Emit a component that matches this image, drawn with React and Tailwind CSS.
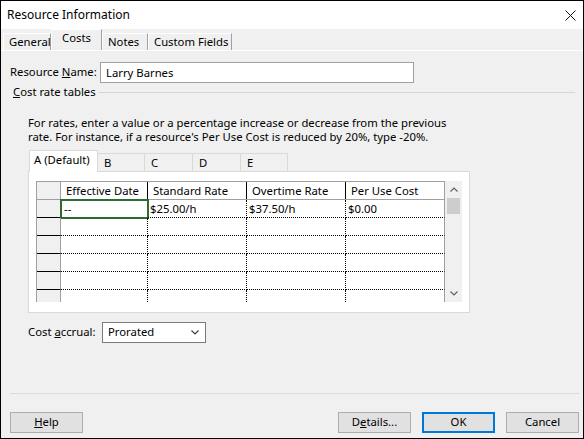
import React from "react";

const font = { fontFamily: '"Segoe UI", "Noto Sans", sans-serif' };

function Chevron({ className = "", up = false }) {
  return (
    <svg width="8" height="5" viewBox="0 0 8 5" className={className}>
      <path
        d={up ? "M0.5 4.5 L4 1 L7.5 4.5" : "M0.5 0.5 L4 4 L7.5 0.5"}
        fill="none"
        stroke="currentColor"
        strokeWidth="1.2"
      />
    </svg>
  );
}

const cols = [
  { key: "date", title: "Effective Date", w: "w-[87px]" },
  { key: "std", title: "Standard Rate", w: "w-[99px]" },
  { key: "ot", title: "Overtime Rate", w: "w-[99px]" },
  { key: "puc", title: "Per Use Cost", w: "w-[99px]" },
];

const rows = [
  { date: "--", std: "$25.00/h", ot: "$37.50/h", puc: "$0.00" },
  {}, {}, {}, {}, {},
];

function Grid() {
  return (
    <div className="flex">
      <div className="h-[121px] w-[409px] overflow-hidden border-l border-t border-[#a0a0a0]">
        <div className="flex h-[18px] border-b border-[#a0a0a0]">
          <div className="w-[24px] shrink-0 bg-[#f0f0f0] border-r border-[#a0a0a0]" />
          {cols.map((c, i) => (
            <div
              key={c.key}
              className={`${c.w} shrink-0 border-r ${i === 3 ? "border-[#a0a0a0]" : "border-black"} pl-[5px] leading-[17px]`}
            >
              {c.title}
            </div>
          ))}
        </div>
        {rows.map((r, ri) => (
          <div key={ri} className="flex h-[18px]">
            <div className="w-[24px] shrink-0 bg-[#f0f0f0] border-r border-[#a0a0a0] border-b border-b-black" />
            {cols.map((c, i) => (
              <div
                key={c.key}
                className={`${c.w} shrink-0 border-b border-dotted border-b-black pl-[2px] leading-[17px] ${
                  i === 3 ? "border-r border-r-[#a0a0a0]" : "border-r border-r-black"
                } ${ri === 0 && i === 0 ? "outline-2 outline-[#2e6b30] -outline-offset-1 pl-[3px]" : ""}`}
                style={i === 3 ? { borderRightStyle: "solid" } : undefined}
              >
                {r[c.key] || ""}
              </div>
            ))}
          </div>
        ))}
      </div>
      <div className="h-[121px] w-[17px] bg-[#f0f0f0] flex flex-col items-center text-[#606060]">
        <div className="h-[17px] flex items-center justify-center">
          <Chevron up />
        </div>
        <div className="w-[13px] h-[16px] bg-[#cdcdcd]" />
        <div className="mt-auto h-[17px] flex items-center justify-center">
          <Chevron />
        </div>
      </div>
    </div>
  );
}

function Button({ children, primary }) {
  return (
    <button
      className={`w-[73px] h-[21px] bg-[#e1e1e1] text-[11.3px] text-black ${
        primary ? "border-2 border-[#0078d7]" : "border border-[#adadad]"
      }`}
    >
      {children}
    </button>
  );
}

export default function App() {
  const outer = ["General", "Costs", "Notes", "Custom Fields"];
  const outerW = ["w-[48px]", "w-[51px]", "w-[46px]", "w-[84px]"];
  const inner = ["A (Default)", "B", "C", "D", "E"];
  const innerW = ["w-[69px]", "w-[47px]", "w-[48px]", "w-[48px]", "w-[47px]"];

  return (
    <div
      className="w-[584px] h-[439px] border border-black bg-[#f0f0f0] flex flex-col text-[11.3px] text-black overflow-hidden whitespace-nowrap"
      style={font}
    >
      {/* title bar */}
      <div className="h-[28px] bg-white flex items-center justify-between pl-[6px] pr-[6px] shrink-0 text-[12px]">
        <span>Resource Information</span>
        <svg width="11" height="11" viewBox="0 0 11 11" className="mr-[1px]">
          <path d="M0.5 0.5 L10.5 10.5 M10.5 0.5 L0.5 10.5" stroke="#111" strokeWidth="1" />
        </svg>
      </div>

      {/* top tabs */}
      <div className="h-[22px] flex items-end pl-[2px] border-b border-white shrink-0">
        {outer.map((t, i) => {
          const sel = i === 1;
          return (
            <div
              key={t}
              className={`${outerW[i]} shrink-0 border-l border-t border-white border-r border-r-[#a0a0a0] flex items-center ${
                sel ? "h-[21px] justify-center pb-[3px]" : "h-[17px] pl-[5px]"
              }`}
            >
              {t}
            </div>
          );
        })}
      </div>

      {/* body */}
      <div className="flex flex-col pl-[9px] flex-1">
        <div className="mt-[11px] flex items-center">
          <span className="w-[90px]">
            Resource <span className="underline">N</span>ame:
          </span>
          <div className="w-[314px] h-[21px] bg-white border border-[#a0a0a0] pl-[5px] leading-[19px]">
            Larry Barnes
          </div>
        </div>

        <div className="mt-[1px] h-[16px] flex items-center pl-[3px] pr-[8px]">
          <span>
            <span className="underline">C</span>ost rate tables
          </span>
          <div className="flex-1 ml-[3px] border-t border-[#d5d5d5]" />
        </div>

        <div className="pl-[18px]">
          <p className="mt-[16px] leading-[14px]">
            For rates, enter a value or a percentage increase or decrease from the previous
            <br />
            rate. For instance, if a resource's Per Use Cost is reduced by 20%, type -20%.
          </p>

          <div className="mt-[6px] flex items-end pl-[1px]">
            {inner.map((t, i) => {
              const sel = i === 0;
              return (
                <div
                  key={t}
                  className={`${innerW[i]} shrink-0 border border-b-0 ${
                    sel
                      ? "h-[22px] bg-white border-[#d9d9d9] -mb-px relative z-10 pl-[4px] leading-[18px]"
                      : "h-[18px] bg-[#f0f0f0] border-[#d9d9d9] border-l-0 pl-[6px] leading-[17px]"
                  }`}
                >
                  {t}
                </div>
              );
            })}
          </div>

          <div className="w-[442px] h-[142px] bg-white border border-[#d9d9d9] pl-[7px] pt-[9px]">
            <Grid />
          </div>

          <div className="mt-[9px] flex items-center">
            <span className="w-[74px]">
              Cost <span className="underline">a</span>ccrual:
            </span>
            <div className="w-[104px] h-[21px] bg-white border border-[#7a7a7a] flex items-center justify-between pl-[5px] pr-[6px]">
              <span>Prorated</span>
              <Chevron className="text-[#404040]" />
            </div>
          </div>
        </div>

        {/* footer */}
        <div className="mt-auto mr-[4px] border-t border-[#dadada] pt-[18px] pb-[5px] flex">
          <Button>
            <span className="underline">H</span>elp
          </Button>
          <div className="ml-auto flex gap-[11px]">
            <Button>
              D<span className="underline">e</span>tails...
            </Button>
            <Button primary>OK</Button>
            <Button>Cancel</Button>
          </div>
        </div>
      </div>
    </div>
  );
}
